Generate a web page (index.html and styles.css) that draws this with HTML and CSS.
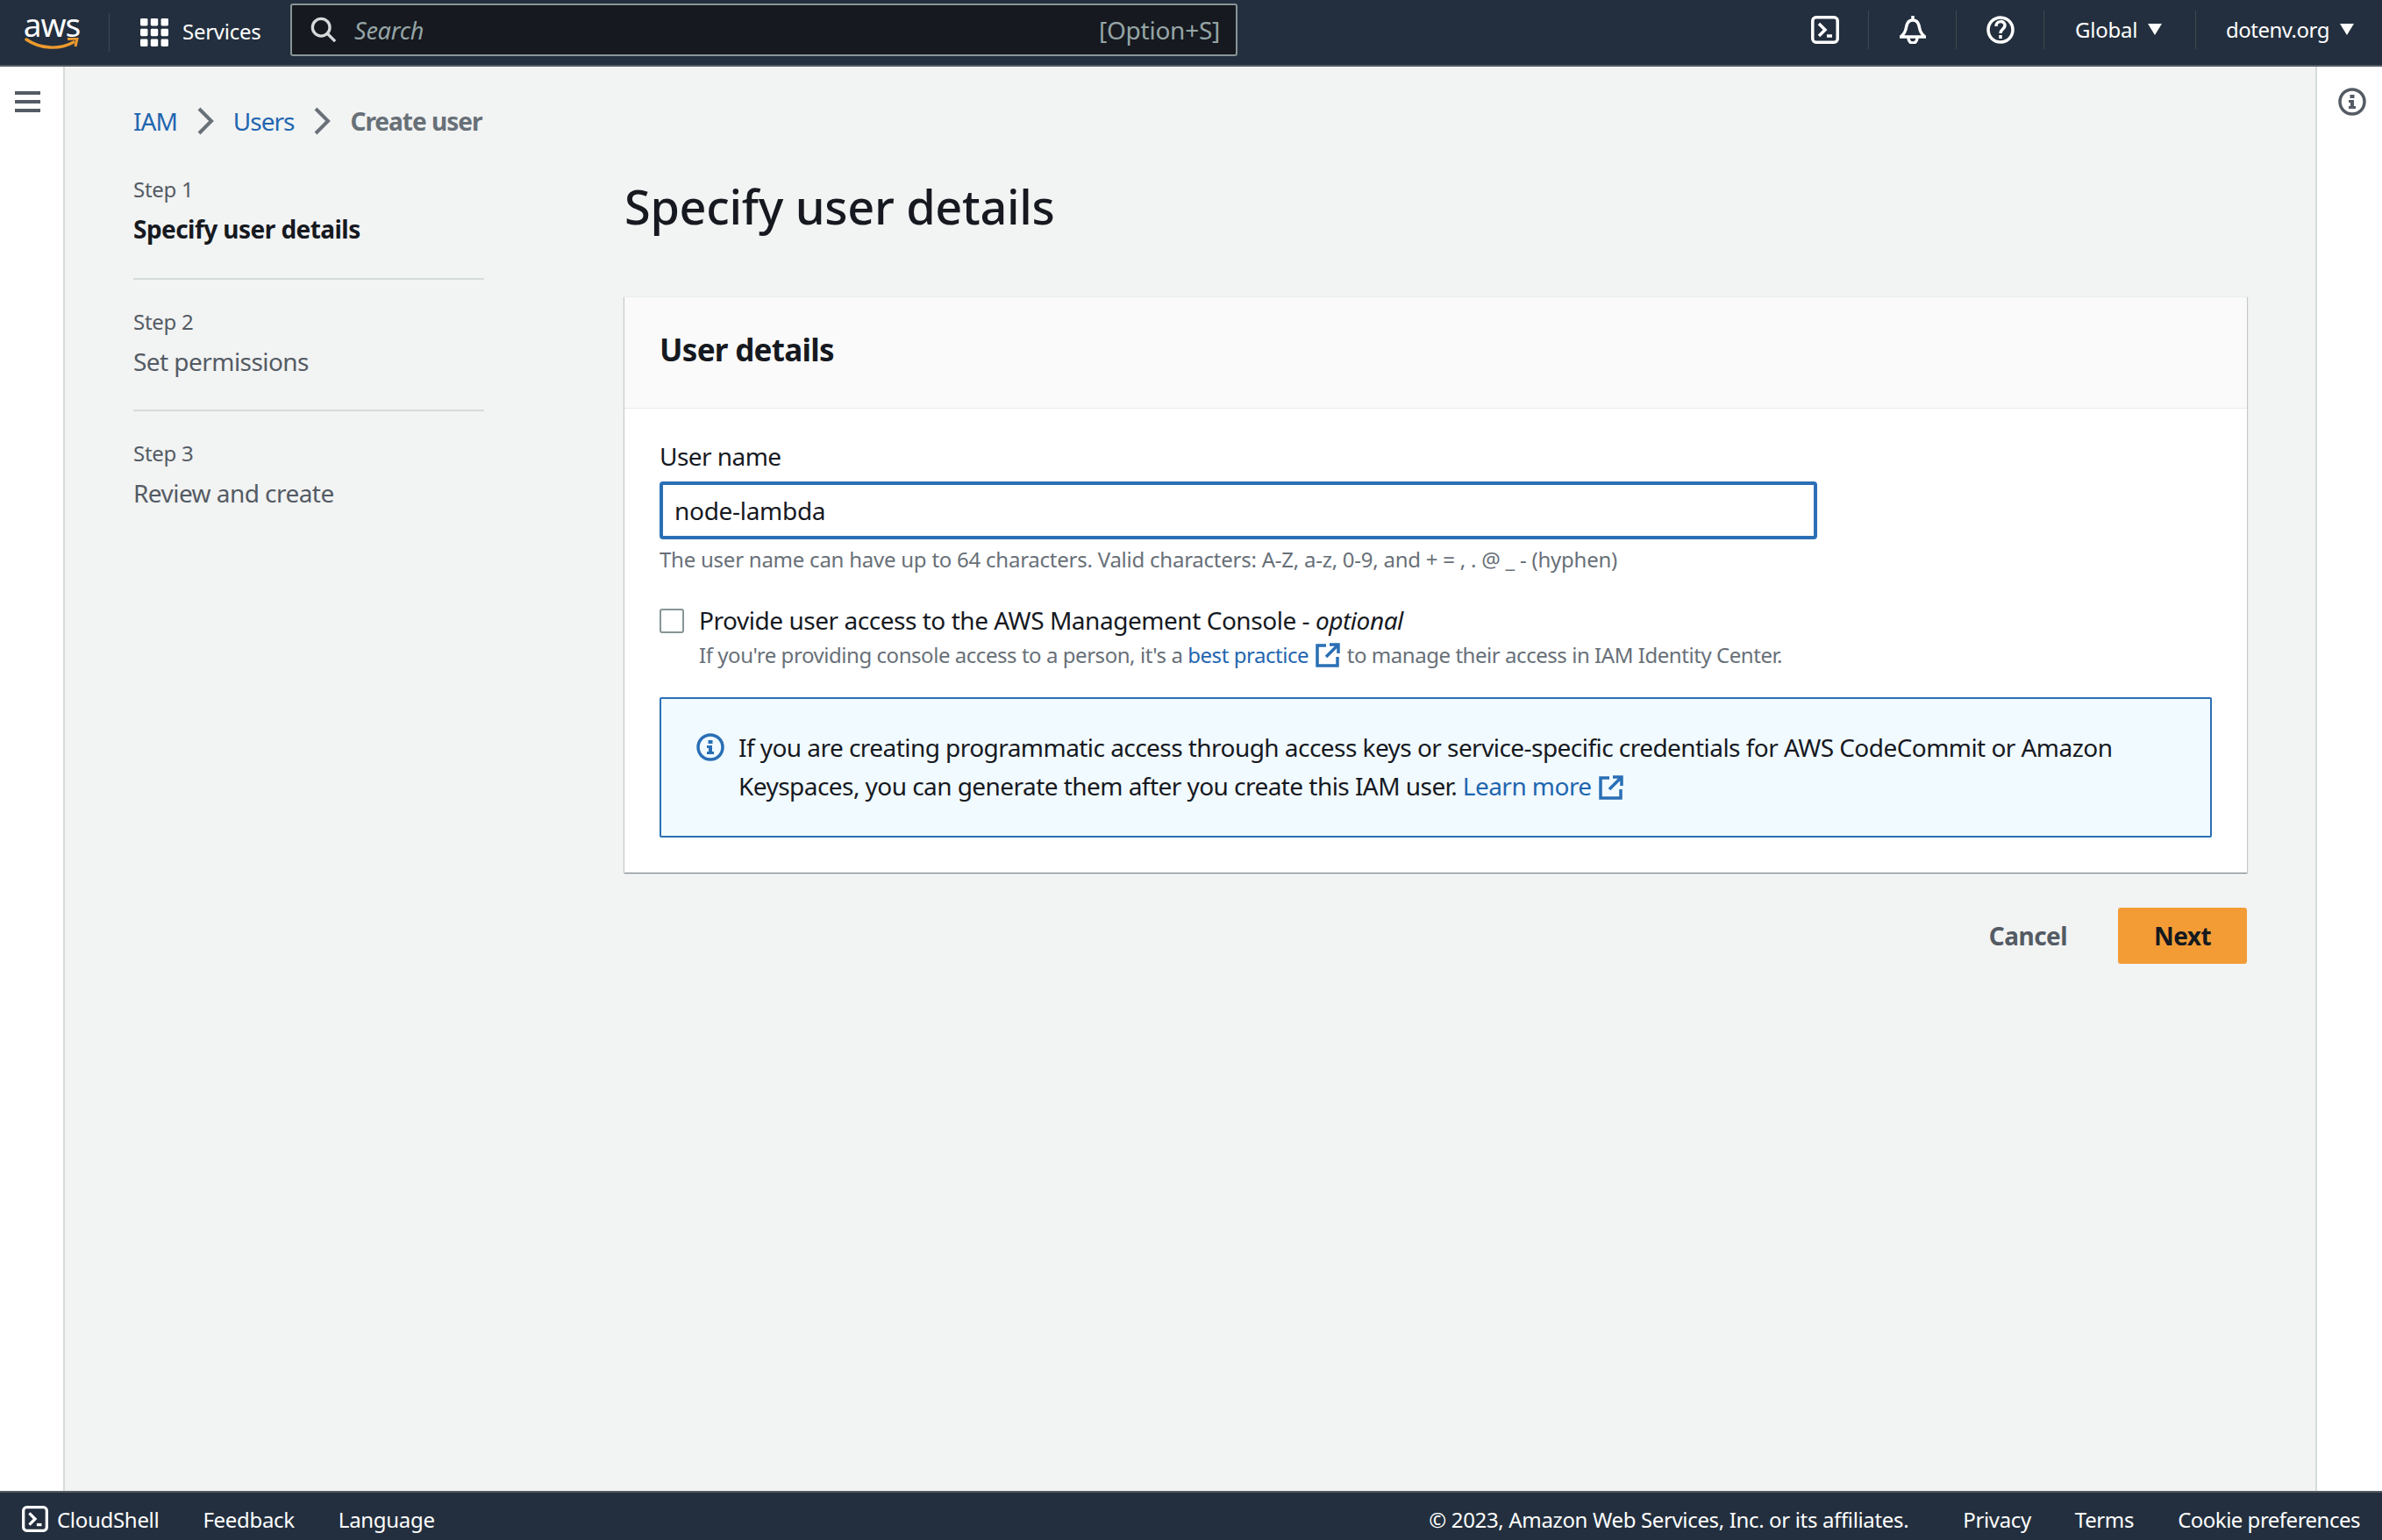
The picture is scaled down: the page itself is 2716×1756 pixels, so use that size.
FILE: index.html
```html
<!DOCTYPE html>
<html lang="en">
<head>
    <meta charset="UTF-8">
    <meta name="viewport" content="width=device-width, initial-scale=1.0">
    <title>Create user | IAM</title>
    <link rel="stylesheet" href="styles.css">
</head>
<body>
    <header class="topbar">
        <div class="logo">
            <span class="logo-text">aws</span>
            <svg class="logo-smile" width="62" height="16" viewBox="0 0 62 16"><path d="M2 2c16 11 38 12 54 3" fill="none" stroke="#ec9a2e" stroke-width="3.4" stroke-linecap="round"/><path d="M49 1.500l11-.5-2 9" fill="none" stroke="#ec9a2e" stroke-width="3"/></svg>
        </div>
        <div class="services">
            <svg width="32" height="32" viewBox="0 0 34 34" fill="#fff"><rect x="0" y="0" width="9" height="9" rx="1.500"/><rect x="12.500" y="0" width="9" height="9" rx="1.500"/><rect x="25" y="0" width="9" height="9" rx="1.500"/><rect x="0" y="12.500" width="9" height="9" rx="1.500"/><rect x="12.500" y="12.500" width="9" height="9" rx="1.500"/><rect x="25" y="12.500" width="9" height="9" rx="1.500"/><rect x="0" y="25" width="9" height="9" rx="1.500"/><rect x="12.500" y="25" width="9" height="9" rx="1.500"/><rect x="25" y="25" width="9" height="9" rx="1.500"/></svg>
            <span>Services</span>
        </div>
        <div class="search">
            <svg width="30" height="30" viewBox="0 0 32 32" fill="none" stroke="#d5dbdb" stroke-width="3.500"><circle cx="13" cy="13" r="10.500"/><path d="M20 20l10 10"/></svg>
            <span class="search-text">Search</span>
            <span class="search-key">[Option+S]</span>
        </div>
        <div class="top-right">
            <div class="top-icon">
                <svg width="32" height="32" viewBox="0 0 32 32" fill="none" stroke="#fff" stroke-width="3.500"><rect x="1.800" y="1.800" width="28.400" height="28.400" rx="4"/><path d="M9 9l7 7-7 7"/><path d="M18 23h6"/></svg>
            </div>
            <div class="top-icon">
                <svg width="32" height="32" viewBox="0 0 32 32" fill="none" stroke="#fff" stroke-width="3.500"><path d="M1 24h30M3 23c5-3 5-8 6-12 1-4 4-6 7-6s6 2 7 6c1 4 1 9 6 12"/><path d="M16 0v5"/><path d="M11 25c0 8 10 8 10 0"/></svg>
            </div>
            <div class="top-icon">
                <svg width="32" height="32" viewBox="0 0 32 32" fill="none" stroke="#fff" stroke-width="3.500"><circle cx="16" cy="16" r="14"/><path d="M11 12c0-7 10-7 10-1 0 4-5 4-5 9"/><path d="M16 22v4"/></svg>
            </div>
            <div class="top-menu region">Global <span class="caret"></span></div>
            <div class="top-menu account">dotenv.org <span class="caret"></span></div>
        </div>
    </header>

    <div class="page">
        <aside class="rail">
            <svg width="30" height="26" viewBox="0 0 30 26" fill="#545b64"><rect y="0" width="29" height="4"/><rect y="10" width="29" height="4"/><rect y="20" width="29" height="4"/></svg>
        </aside>

        <main class="content">
            <nav class="crumbs">
                <a href="#">IAM</a>
                <svg class="crumb-sep" width="22" height="32" viewBox="0 0 22 32" fill="none" stroke="#687078" stroke-width="4"><path d="M4 2l14 14L4 30"/></svg>
                <a href="#">Users</a>
                <svg class="crumb-sep" width="22" height="32" viewBox="0 0 22 32" fill="none" stroke="#687078" stroke-width="4"><path d="M4 2l14 14L4 30"/></svg>
                <span class="crumb-current">Create user</span>
            </nav>

            <div class="wizard">
                <ol class="steps">
                    <li class="step active">
                        <small>Step 1</small>
                        <span>Specify user details</span>
                    </li>
                    <li class="step">
                        <small>Step 2</small>
                        <span>Set permissions</span>
                    </li>
                    <li class="step">
                        <small>Step 3</small>
                        <span>Review and create</span>
                    </li>
                </ol>

                <section class="form-area">
                    <h1>Specify user details</h1>

                    <div class="card">
                        <div class="card-head">
                            <h2>User details</h2>
                        </div>
                        <div class="card-body">
                            <label class="field-label" for="username">User name</label>
                            <input id="username" class="text-input" type="text" value="node-lambda">
                            <p class="hint">The user name can have up to 64 characters. Valid characters: A-Z, a-z, 0-9, and + = , . @ _ - (hyphen)</p>

                            <div class="check-row">
                                <span class="checkbox"></span>
                                <div>
                                    <div class="check-label">Provide user access to the AWS Management Console - <em>optional</em></div>
                                    <div class="check-sub">If you're providing console access to a person, it's a <a href="#">best practice</a>
                                        <svg class="ext" width="28" height="28" viewBox="0 0 28 28" fill="none" stroke="#2a6fb5" stroke-width="3.500"><path d="M12 3H2v23h23V16"/><path d="M16 2h10v10"/><path d="M26 2L12 16"/></svg>
                                        to manage their access in IAM Identity Center.</div>
                                </div>
                            </div>

                            <div class="alert">
                                <svg class="alert-icon" width="32" height="32" viewBox="0 0 32 32"><circle cx="16" cy="16" r="14" fill="none" stroke="#2a6fb5" stroke-width="3.500"/><rect x="13.500" y="8" width="5" height="4" fill="#2a6fb5"/><path d="M12 14h6v7h2v3h-8v-3h2v-4h-2z" fill="#2a6fb5"/></svg>
                                <p>If you are creating programmatic access through access keys or service-specific credentials for AWS CodeCommit or Amazon Keyspaces, you can generate them after you create this IAM user. <a href="#">Learn more</a>
                                    <svg class="ext" width="28" height="28" viewBox="0 0 28 28" fill="none" stroke="#2a6fb5" stroke-width="3.500"><path d="M12 3H2v23h23V16"/><path d="M16 2h10v10"/><path d="M26 2L12 16"/></svg></p>
                            </div>
                        </div>
                    </div>

                    <div class="actions">
                        <button class="btn-link">Cancel</button>
                        <button class="btn-primary">Next</button>
                    </div>
                </section>
            </div>
        </main>

        <aside class="rail rail-right">
            <svg width="32" height="32" viewBox="0 0 32 32"><circle cx="16" cy="16" r="14" fill="none" stroke="#545b64" stroke-width="3.500"/><rect x="13.500" y="8" width="5" height="4" fill="#545b64"/><path d="M12 14h6v7h2v3h-8v-3h2v-4h-2z" fill="#545b64"/></svg>
        </aside>
    </div>

    <footer class="footbar">
        <div class="foot-left">
            <span class="foot-shell">
                <svg width="30" height="32" viewBox="0 0 32 32" fill="none" stroke="#fff" stroke-width="3.500"><rect x="1.800" y="1.800" width="28.400" height="28.400" rx="4"/><path d="M9 9l7 7-7 7"/><path d="M18 23h6"/></svg>
                CloudShell
            </span>
            <span>Feedback</span>
            <span>Language</span>
        </div>
        <div class="foot-right">
            <span class="copyright">© 2023, Amazon Web Services, Inc. or its affiliates.</span>
            <span>Privacy</span>
            <span>Terms</span>
            <span class="cookie">Cookie preferences</span>
        </div>
    </footer>
</body>
</html>
```

FILE: styles.css
```css
* {
    box-sizing: border-box;
}

body {
    display: flex;
    flex-direction: column;
    height: 100vh;
    margin: 0;
    background-color: #f2f3f3;
    color: #16191f;
    font-family: "Noto Sans", "Open Sans", sans-serif;
    font-size: 28px;
    letter-spacing: -0.55px;
    overflow: hidden;
}

a {
    color: #1f66b0;
    text-decoration: none;
}

/* top bar */
.topbar {
    display: flex;
    align-items: center;
    height: 76px;
    flex-shrink: 0;
    background-color: #232f3e;
    border-bottom: 2px solid #545b64;
    color: #fff;
    font-size: 24px;
    letter-spacing: -0.25px;
}

.logo {
    display: flex;
    flex-direction: column;
    align-items: center;
    width: 125px;
    height: 44px;
    border-right: 1px solid #414750;
    padding-right: 6px;
}

.logo-text {
    font-size: 37px;
    line-height: 26px;
    letter-spacing: -1px;
}

.logo-smile {
    margin-top: 2px;
}

.services {
    display: flex;
    align-items: center;
    gap: 16px;
    margin-left: 35px;
    width: 171px;
}

.services span {
    padding-bottom: 3px;
}

.search {
    display: flex;
    align-items: center;
    width: 1080px;
    height: 60px;
    background-color: #16191f;
    border: 2px solid #879596;
    border-radius: 3px;
    padding: 0 18px 0 21px;
    margin-top: -6px;
}

.search-text {
    margin-left: 20px;
    flex: 1;
    font-style: italic;
    font-size: 27px;
    color: #95a5a6;
}

.search-key {
    font-size: 28px;
    color: #95a5a6;
}

.top-right {
    display: flex;
    align-items: center;
    margin-left: auto;
    height: 50px;
    margin-top: -6px;
}

.top-icon {
    display: flex;
    align-items: center;
    justify-content: center;
    width: 100px;
    height: 44px;
    border-right: 1px solid #414750;
}

.top-menu {
    display: flex;
    align-items: center;
    height: 44px;
    gap: 12px;
    padding-bottom: 2px;
    white-space: nowrap;
}

.region {
    width: 173px;
    padding-left: 35px;
    border-right: 1px solid #414750;
}

.account {
    width: 212px;
    padding-left: 34px;
    letter-spacing: -0.5px;
}

.caret {
    width: 0;
    height: 0;
    border-left: 8px solid transparent;
    border-right: 8px solid transparent;
    border-top: 13px solid #fff;
}

/* page columns */
.page {
    display: flex;
    flex: 1;
    min-height: 0;
}

.rail {
    width: 74px;
    flex-shrink: 0;
    background-color: #fff;
    border-right: 2px solid #d5dbdb;
    padding: 28px 0 0 17px;
}

.rail svg {
    display: block;
}

.rail-right {
    width: 76px;
    border-right: 0;
    border-left: 2px solid #d5dbdb;
    padding: 24px 0 0 24px;
}

.content {
    flex: 1;
    padding: 0 78px 0 78px;
}

/* breadcrumbs */
.crumbs {
    display: flex;
    align-items: center;
    height: 38px;
    margin-top: 43px;
    gap: 21px;
    letter-spacing: -1px;
}

.crumb-current {
    color: #687078;
    font-weight: 700;
}

/* wizard */
.wizard {
    display: flex;
    margin-top: 29px;
}

.steps {
    list-style: none;
    width: 400px;
    margin: 0 160px 0 0;
    padding: 0;
    flex-shrink: 0;
}

.step {
    display: flex;
    flex-direction: column;
    height: 150px;
    padding-top: 32px;
    border-bottom: 2px solid #d5dbdb;
    color: #545b64;
}

.step.active {
    height: 133px;
    padding-top: 14px;
}

.step:last-child {
    border-bottom: 0;
}

.step small {
    font-size: 24px;
    letter-spacing: -0.3px;
    line-height: 32px;
    margin-bottom: 13px;
}

.step span {
    line-height: 32px;
}

.step.active span {
    color: #16191f;
    font-weight: 700;
}

/* form */
.form-area {
    flex: 1;
}

h1 {
    margin: 13px 0 0;
    font-size: 54px;
    font-weight: 500;
    letter-spacing: -0.3px;
    line-height: 72px;
}

h2 {
    margin: 0;
    font-size: 35px;
    font-weight: 700;
    letter-spacing: -0.7px;
    line-height: 48px;
}

.card {
    margin-top: 67px;
    background-color: #fff;
    box-shadow: 0 1px 1px 0 rgba(0, 28, 36, 0.3), 1px 1px 1px 0 rgba(0, 28, 36, 0.15), -1px 1px 1px 0 rgba(0, 28, 36, 0.15);
    border-top: 1px solid #eaeded;
}

.card-head {
    height: 127px;
    padding: 36px 40px 0;
    background-color: #fafafa;
    border-bottom: 1px solid #eaeded;
}

.card-body {
    padding: 36px 40px 40px;
}

.field-label {
    display: block;
    line-height: 36px;
}

.text-input {
    display: block;
    width: 1320px;
    height: 66px;
    margin-top: 11px;
    padding: 0 13px;
    border: 4px solid #2a6fb5;
    border-radius: 4px;
    font: inherit;
    letter-spacing: -0.3px;
    color: #16191f;
    outline: none;
}

.hint {
    margin: 7px 0 0;
    font-size: 24px;
    letter-spacing: -0.24px;
    line-height: 32px;
    color: #687078;
}

.check-row {
    display: flex;
    gap: 17px;
    margin-top: 34px;
}

.checkbox {
    width: 28px;
    height: 28px;
    margin-top: 6px;
    border: 2px solid #879596;
    border-radius: 3px;
    background-color: #fff;
    flex-shrink: 0;
}

.check-label {
    line-height: 38px;
    letter-spacing: -0.46px;
}

.check-sub {
    margin-top: 3px;
    font-size: 24px;
    letter-spacing: -0.45px;
    line-height: 36px;
    color: #687078;
}

.ext {
    vertical-align: -5px;
    margin: 0 2px;
}

.alert {
    display: flex;
    gap: 16px;
    height: 160px;
    margin-top: 30px;
    padding: 33px 40px 0 40px;
    background-color: #f1faff;
    border: 2px solid #2a6fb5;
    border-radius: 2px;
}

.alert-icon {
    flex-shrink: 0;
    margin-top: 6px;
}

.alert p {
    margin: 0;
    line-height: 44px;
    letter-spacing: -0.55px;
}

.actions {
    display: flex;
    justify-content: flex-end;
    align-items: center;
    gap: 58px;
    margin-top: 40px;
}

.btn-link,
.btn-primary {
    font: inherit;
    font-weight: 700;
    letter-spacing: inherit;
    border: 0;
    background: none;
    padding: 0;
}

.btn-link {
    color: #545b64;
}

.btn-primary {
    width: 147px;
    height: 64px;
    background-color: #f39c36;
    border-radius: 3px;
    color: #16191f;
}

/* footer */
.footbar {
    display: flex;
    justify-content: space-between;
    align-items: center;
    height: 56px;
    flex-shrink: 0;
    background-color: #232f3e;
    border-top: 2px solid #545b64;
    color: #fff;
    font-size: 24px;
    letter-spacing: -0.35px;
    padding: 6px 25px 0;
}

.foot-left,
.foot-right {
    display: flex;
    align-items: center;
}

.foot-left {
    gap: 50px;
    letter-spacing: -0.3px;
}

.foot-shell {
    display: flex;
    align-items: center;
    gap: 10px;
}

.foot-right {
    gap: 50px;
}

.copyright {
    margin-right: 12px;
}

.cookie {
    letter-spacing: -0.5px;
}
```
